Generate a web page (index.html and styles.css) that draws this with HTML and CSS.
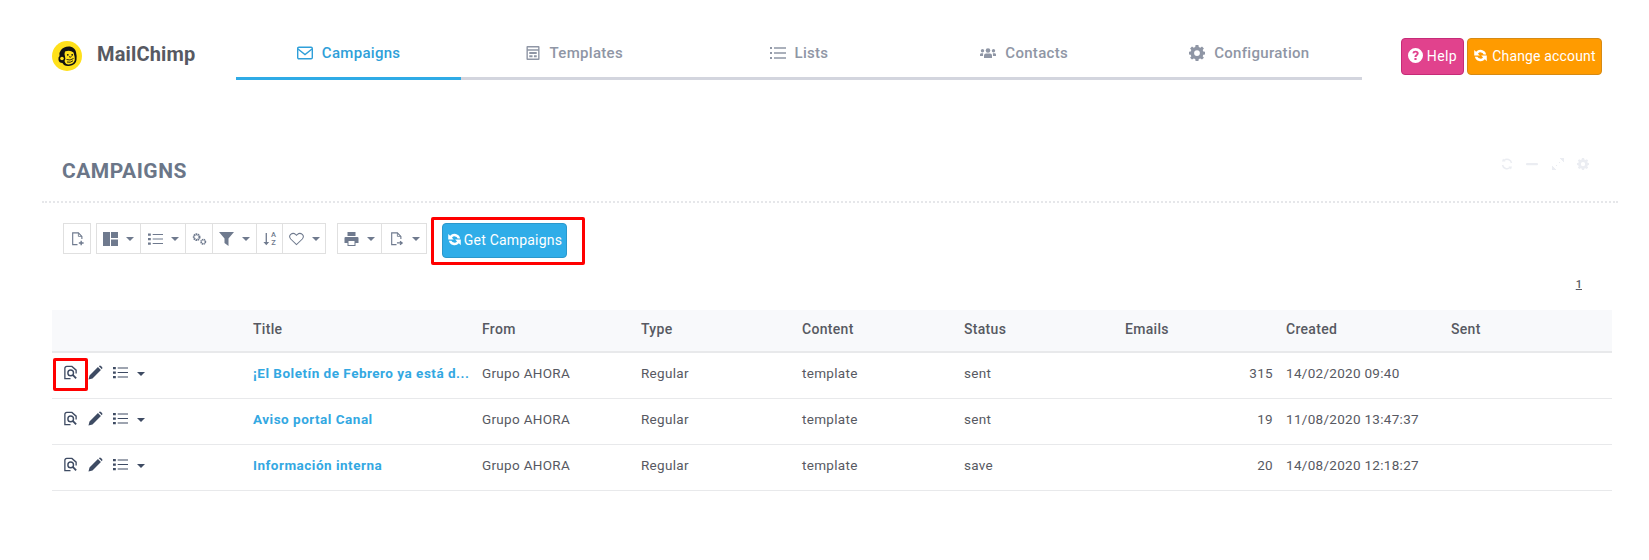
FILE: index.html
```html
<!DOCTYPE html>
<html lang="en">
<head>
<meta charset="utf-8">
<title>MailChimp Campaigns</title>
<link rel="stylesheet" href="styles.css">
</head>
<body>
<svg class="defs" aria-hidden="true">
  <defs>
    <symbol id="i-sync" viewBox="0 0 16 16"><path d="M14 6.800A6.200 6.200 0 0 0 3.300 3.900L1.300 2V8H7.300L5.300 6A3.500 3.500 0 0 1 11.300 6.800ZM2 9.200A6.200 6.200 0 0 0 12.700 12.100L14.700 14V8H8.700L10.700 10A3.500 3.500 0 0 1 4.700 9.200Z" fill="currentColor"/></symbol>
    <symbol id="i-caret" viewBox="0 0 8 4"><path d="M0 0H8L4 4Z" fill="currentColor"/></symbol>
    <symbol id="i-list" viewBox="0 0 16 14"><path d="M0 1H3V3.400H0ZM0 5.800H3V8.200H0ZM0 10.600H3V13H0ZM5 1.600H16V2.800H5ZM5 6.400H16V7.600H5ZM5 11.200H16V12.400H5Z" fill="currentColor"/></symbol>
    <symbol id="i-doc" viewBox="0 0 14 16"><path d="M7 14.500H1.500V1H8L12 5V8" fill="none" stroke="currentColor" stroke-width="1.300"/><path d="M8 1V5H12" fill="none" stroke="currentColor" stroke-width="1"/></symbol>
    <symbol id="i-pen" viewBox="0 0 16 16"><path d="M0.500 15.500L1.600 11.200L10.600 2.200L13.800 5.400L4.800 14.400ZM11.600 1.200Q12.700 0.100 13.800 1L15 2.200Q15.900 3.300 14.800 4.400Z" fill="currentColor"/></symbol>
    <symbol id="i-view" viewBox="0 0 16 16"><path d="M8 14.500H2V3.500A2 2 0 0 1 4 1.500H9.500L14 5.500V9" fill="none" stroke="currentColor" stroke-width="1.400"/><circle cx="8.200" cy="8.400" r="3" fill="none" stroke="currentColor" stroke-width="1.500"/><path d="M10.400 10.600L14 14.200" stroke="currentColor" stroke-width="2"/></symbol>
    <symbol id="i-cog" viewBox="0 0 16 16"><path d="M6.600 0H9.400L9.800 2.100L11.300 2.700L13 1.500L14.900 3.400L13.700 5.100L14.300 6.600L16 6.800V9.400L14.300 9.700L13.700 11.200L14.900 12.800L13 14.600L11.300 13.500L9.800 14.100L9.400 16H6.600L6.200 14.100L4.700 13.500L3 14.600L1.100 12.800L2.300 11.200L1.700 9.700L0 9.400V6.800L1.700 6.600L2.300 5.100L1.100 3.400L3 1.500L4.700 2.700L6.200 2.100ZM8 5.200A2.900 2.900 0 1 0 8 11A2.900 2.900 0 1 0 8 5.200Z" fill="currentColor" fill-rule="evenodd"/></symbol>
  </defs>
</svg>

<header class="topbar">
  <div class="brand">
    <svg class="brand-logo" viewBox="0 0 30 30" aria-hidden="true">
      <circle cx="15" cy="15" r="15" fill="#ffe01b"/>
      <path d="M9 9Q12 5 18 5.500Q23 6.500 24 11Q25 15 24.500 19Q24 24 17 25Q12 25.500 10.500 22Q7 22 6.500 19Q6 16 7.500 15Q6.500 12 9 9Z" fill="#111"/>
      <path d="M13 10.500Q18 8.500 21.500 11.500Q23 16 22.800 19Q22 23 16.500 23.500Q13.500 23.500 12.500 20Q14 18 13 15.500Q12 13 13 10.500Z" fill="#ffe01b"/>
      <circle cx="15.800" cy="13.800" r="0.900" fill="#111"/><circle cx="20.200" cy="13.800" r="0.900" fill="#111"/>
      <path d="M14.500 18.500Q18 20 21.500 17.500M15 21Q18.500 22 21 19.800M17 15.500Q18 17 19.500 15.500" fill="none" stroke="#111" stroke-width="0.900"/>
      <circle cx="10" cy="17.500" r="1.800" fill="#ffe01b"/>
    </svg>
    <span class="brand-name">MailChimp</span>
  </div>
  <nav class="tabs">
    <a class="tab tab-active">
      <svg class="tab-icon" viewBox="0 0 16 13"><rect x="0.700" y="0.700" width="14.600" height="11.600" rx="1.200" fill="none" stroke="currentColor" stroke-width="1.400"/><path d="M1 2.500L8 8L15 2.500" fill="none" stroke="currentColor" stroke-width="1.400"/></svg>
      Campaigns</a>
    <a class="tab">
      <svg class="tab-icon" viewBox="0 0 14 15"><path d="M1 0H13A1 1 0 0 1 14 1V14A1 1 0 0 1 13 15H1A1 1 0 0 1 0 14V1A1 1 0 0 1 1 0ZM1.500 1.500V3.500H12.500V1.500ZM1.500 5V13.500H12.500V5ZM3 6.500H11V8.500H3ZM3 10H6.500V12H3ZM8 10H11V12H8Z" fill="currentColor" fill-rule="evenodd"/></svg>
      Templates</a>
    <a class="tab">
      <svg class="tab-icon" viewBox="0 0 16 13"><path d="M0 0.500H2V2.500H0ZM0 5.500H2V7.500H0ZM0 10.500H2V12.500H0ZM4 0.800H16V2.200H4ZM4 5.800H16V7.200H4ZM4 10.800H16V12.200H4Z" fill="currentColor"/></svg>
      Lists</a>
    <a class="tab">
      <svg class="tab-icon" viewBox="0 0 16 10"><circle cx="8" cy="2.500" r="2.300" fill="currentColor"/><circle cx="2.500" cy="2.800" r="1.700" fill="currentColor"/><circle cx="13.500" cy="2.800" r="1.700" fill="currentColor"/><path d="M4 10V7.500Q4 5.500 6 5.500H10Q12 5.500 12 7.500V10ZM0 8V6.500Q0 5.200 1.500 5.200H3.200Q3 6 3 8ZM16 8V6.500Q16 5.200 14.500 5.200H12.800Q13 6 13 8Z" fill="currentColor"/></svg>
      Contacts</a>
    <a class="tab">
      <svg class="tab-icon tab-icon-cog"><use href="#i-cog"/></svg>
      Configuration</a>
  </nav>
  <div class="account-actions">
    <a class="btn btn-help">
      <svg class="btn-icon" viewBox="0 0 14 14"><path d="M7 0A7 7 0 1 1 7 14A7 7 0 1 1 7 0ZM7 2.500Q4.500 2.500 4 4.800L5.800 5.200Q6 4.200 7 4.200Q8.200 4.300 8.100 5.100Q8 5.700 7 6.300Q6 7 6 8.500H7.900Q7.900 7.800 8.700 7.200Q10 6.300 10 5Q9.800 2.600 7 2.500ZM6 9.300V11.200H8V9.300Z" fill="#fff" fill-rule="evenodd"/></svg>
      Help</a>
    <a class="btn btn-account"><svg class="btn-icon"><use href="#i-sync"/></svg> Change account</a>
  </div>
</header>

<main class="portlet">
  <div class="portlet-head">
    <h1 class="portlet-title">CAMPAIGNS</h1>
    <div class="portlet-tools">
      <svg class="tool" viewBox="0 0 12 12"><path d="M10.500 5A4.500 4.500 0 0 0 3 2.500M1.500 7A4.500 4.500 0 0 0 9 9.500" fill="none" stroke="currentColor" stroke-width="1.500"/><path d="M2 0.500L4.500 3.500H1ZM10 11.500L7.500 8.500H11Z" fill="currentColor"/></svg>
      <svg class="tool" viewBox="0 0 12 12"><rect y="5" width="12" height="2.200" rx="1" fill="currentColor"/></svg>
      <svg class="tool" viewBox="0 0 12 12"><path d="M8 0H12V4ZM0 8L4 12H0ZM7 4L8 5M4 7L5 8" fill="currentColor" stroke="currentColor"/></svg>
      <svg class="tool"><use href="#i-cog"/></svg>
    </div>
  </div>

  <div class="toolbar">
    <div class="tool-group">
      <button class="tbtn tbtn-new">
        <svg class="ticon" viewBox="0 0 14 16"><use href="#i-doc"/><path d="M8.500 12.500H14M11.200 10V15" stroke="currentColor" stroke-width="1.600"/></svg>
      </button>
    </div>
    <div class="tool-group">
      <button class="tbtn w43">
        <svg class="ticon" viewBox="0 0 15 14"><path d="M0 0H7V14H0ZM8 0H15V6H8ZM8 7.500H15V14H8Z" fill="currentColor"/></svg>
        <svg class="caret"><use href="#i-caret"/></svg>
      </button>
      <button class="tbtn w45">
        <svg class="ticon" viewBox="0 0 16 14"><use href="#i-list"/></svg>
        <svg class="caret"><use href="#i-caret"/></svg>
      </button>
      <button class="tbtn w27">
        <svg class="ticon" viewBox="0 0 16 14"><circle cx="5" cy="5" r="3" fill="none" stroke="currentColor" stroke-width="2.200" stroke-dasharray="1.600 .5"/><circle cx="12" cy="10" r="2.300" fill="none" stroke="currentColor" stroke-width="1.800" stroke-dasharray="1.200 .5"/></svg>
      </button>
      <button class="tbtn w44">
        <svg class="ticon" viewBox="0 0 15 14"><path d="M0 0H15L9.500 6.500V14L5.500 11V6.500Z" fill="currentColor"/></svg>
        <svg class="caret"><use href="#i-caret"/></svg>
      </button>
      <button class="tbtn w26 tbtn-sort">
        <svg class="ticon" viewBox="0 0 8 14"><path d="M3 0H4.500V10.500H7L3.800 14L0.500 10.500H3Z" fill="currentColor"/></svg><span class="az">A<br>Z</span>
      </button>
      <button class="tbtn w43">
        <svg class="ticon" viewBox="0 0 16 14"><path d="M8 13L1.800 7Q-0.500 4.300 1.800 2Q4.500 0 7 2L8 3L9 2Q11.500 0 14.200 2Q16.500 4.300 14.200 7Z" fill="none" stroke="currentColor" stroke-width="1.100"/></svg>
        <svg class="caret"><use href="#i-caret"/></svg>
      </button>
    </div>
    <div class="tool-group">
      <button class="tbtn w43">
        <svg class="ticon" viewBox="0 0 14 14"><path d="M3 0H11V4H3ZM1 5H13Q14 5 14 6V11H11V14H3V11H0V6Q0 5 1 5ZM4 9V13H10V9Z" fill="currentColor" fill-rule="evenodd"/></svg>
        <svg class="caret"><use href="#i-caret"/></svg>
      </button>
      <button class="tbtn w45">
        <svg class="ticon" viewBox="0 0 14 16"><use href="#i-doc"/><path d="M7.500 12.500H13M11 10.500L13.500 12.500L11 14.500" fill="none" stroke="currentColor" stroke-width="1.400"/></svg>
        <svg class="caret"><use href="#i-caret"/></svg>
      </button>
    </div>
    <a class="btn btn-get"><svg class="btn-icon"><use href="#i-sync"/></svg> Get Campaigns</a>
  </div>

  <div class="pager"><a class="pager-link">1</a></div>

  <table class="grid">
    <colgroup>
      <col class="c-act"><col class="c-title"><col class="c-from"><col class="c-type"><col class="c-content"><col class="c-status"><col class="c-emails"><col class="c-created"><col class="c-sent">
    </colgroup>
    <thead>
      <tr><th></th><th>Title</th><th>From</th><th>Type</th><th>Content</th><th>Status</th><th>Emails</th><th>Created</th><th>Sent</th></tr>
    </thead>
    <tbody>
      <tr>
        <td class="actions"><span class="action-set"><svg class="aicon"><use href="#i-view"/></svg><svg class="aicon"><use href="#i-pen"/></svg><svg class="aicon"><use href="#i-list"/></svg><svg class="acaret"><use href="#i-caret"/></svg></span></td>
        <td><a class="title-link">¡El Boletín de Febrero ya está d...</a></td><td>Grupo AHORA</td><td>Regular</td><td>template</td><td>sent</td><td class="num">315</td><td>14/02/2020 09:40</td><td></td>
      </tr>
      <tr>
        <td class="actions"><span class="action-set"><svg class="aicon"><use href="#i-view"/></svg><svg class="aicon"><use href="#i-pen"/></svg><svg class="aicon"><use href="#i-list"/></svg><svg class="acaret"><use href="#i-caret"/></svg></span></td>
        <td><a class="title-link">Aviso portal Canal</a></td><td>Grupo AHORA</td><td>Regular</td><td>template</td><td>sent</td><td class="num">19</td><td>11/08/2020 13:47:37</td><td></td>
      </tr>
      <tr>
        <td class="actions"><span class="action-set"><svg class="aicon"><use href="#i-view"/></svg><svg class="aicon"><use href="#i-pen"/></svg><svg class="aicon"><use href="#i-list"/></svg><svg class="acaret"><use href="#i-caret"/></svg></span></td>
        <td><a class="title-link">Información interna</a></td><td>Grupo AHORA</td><td>Regular</td><td>template</td><td>save</td><td class="num">20</td><td>14/08/2020 12:18:27</td><td></td>
      </tr>
    </tbody>
  </table>
</main>

<div class="mark mark-get"></div>
<div class="mark mark-view"></div>
</body>
</html>
```
FILE: styles.css
```css
* { box-sizing: border-box; }
html, body { margin: 0; height: 100%; background: #fff; }
body {
  position: relative;
  font-family: Roboto, "Liberation Sans", sans-serif;
  font-size: 13.5px;
  color: #575962;
  overflow: hidden;
}
.defs { position: absolute; width: 0; height: 0; }

.topbar { display: flex; padding: 38px 0 0 52px; height: 80px; }
.brand { display: flex; align-items: flex-start; width: 184px; padding-top: 3px; gap: 15px; }
.brand-logo { width: 30px; height: 30px; flex: none; }
.brand-name { font-size: 20px; font-weight: 700; color: #575962; line-height: 26px; letter-spacing: 0.15px; }

.tabs { display: flex; width: 1126px; height: 42px; border-bottom: 3px solid #d3d5de; }
.tab {
  display: flex; align-items: center; justify-content: center; gap: 9px;
  flex: 0 0 225.2px; height: 42px; padding-bottom: 10px;
  font-size: 15px; font-weight: 500; color: #8f96a5; letter-spacing: 0.3px;
  border-bottom: 3px solid transparent;
}
.tab-active { color: #2f9fd9; border-bottom-color: #2fabe6; }
.tab-icon { width: 16px; height: 14px; flex: none; }
.tab-icon-cog { width: 16px; height: 16px; }

.account-actions { display: flex; gap: 3px; margin-left: 39px; }
.btn {
  display: inline-flex; align-items: center; justify-content: center; gap: 4px;
  height: 37px; padding-bottom: 2px; border: 1px solid; border-radius: 4px;
  color: #fff; font-size: 14px; font-weight: 400; letter-spacing: 0.15px;
}
.btn-help { width: 63px; background: #e1428d; border-color: #c62b78; letter-spacing: 0.4px; }
.btn-account { width: 135px; background: #ff9b00; border-color: #d68a14; }
.btn-icon { width: 15px; height: 15px; flex: none; color: #fff; }

.portlet { margin: 0 31px 0 42px; }
.portlet-head {
  display: flex; align-items: center; justify-content: space-between;
  height: 84px; margin-top: 39px; padding: 0 29px 0 20px;
  border-bottom: 2px dotted #e6e7ea;
}
.portlet-title { margin: 0; padding-top: 21px; font-size: 21px; font-weight: 700; color: #6b7688; letter-spacing: 0.5px; }
.portlet-tools { display: flex; gap: 13.5px; align-items: center; color: #ebedf2; margin-top: 8px; }
.tool { width: 12px; height: 12px; }

.toolbar { display: flex; align-items: flex-start; gap: 5px; padding: 20px 0 0 21px; height: 72px; }
.tool-group { display: flex; height: 31px; border: 1px solid #e0e0e0; }
.tool-group:nth-child(3) { margin-left: 6px; }
.tbtn {
  display: flex; align-items: center; justify-content: center; gap: 8px;
  height: 29px; padding: 0; background: #fff; border: 0; border-left: 1px solid #e0e0e0;
  color: #6f7a8e; font: inherit;
}
.tbtn:first-child { border-left: 0; }
.tbtn-new { width: 26px; }
.w43 { width: 43px; }
.w44 { width: 44px; }
.w45 { width: 45px; }
.w27 { width: 27px; }
.w26 { width: 26px; }
.ticon { width: 15px; height: 14px; flex: none; }
.caret { width: 8px; height: 4px; flex: none; color: #6f7a8e; }
.tbtn-sort { gap: 1px; }
.tbtn-sort .ticon { width: 7px; }
.az { font-size: 7.500px; line-height: 7.500px; font-weight: 500; color: #6f7a8e; }
.btn-get { width: 125px; height: 35px; margin-left: 10px; background: #2fade8; border-color: #2a98cc; gap: 2px; letter-spacing: 0.2px; }

.pager { height: 35px; padding: 1px 36px 0 0; text-align: right; font-size: 11px; font-weight: 500; line-height: 17px; }
.pager-link { text-decoration: underline; color: #575962; }

.grid { width: 1560px; margin-left: 10px; border-collapse: collapse; table-layout: fixed; }
.c-act { width: 191px; }
.c-title { width: 229px; }
.c-from { width: 159px; }
.c-type { width: 161px; }
.c-content { width: 162px; }
.c-status { width: 161px; }
.c-emails { width: 161px; }
.c-created { width: 165px; }
.c-sent { width: 171px; }
th {
  height: 42px; padding: 0 10px 4px; text-align: left; background: #f8f9fb;
  border-bottom: 2px solid #e8e9eb; font-size: 14px; font-weight: 500; color: #575962; letter-spacing: 0.3px;
}
td { height: 46px; padding: 0 10px 5px; border-bottom: 1px solid #e8e9eb; white-space: nowrap; letter-spacing: 0.3px; }
.title-link { color: #33a8e2; font-weight: 700; letter-spacing: 0.5px; }
.num { text-align: right; padding-right: 3px; }
.actions { padding-left: 11px; }
.action-set { display: flex; align-items: center; gap: 10px; color: #3e4b63; }
.aicon { width: 15px; height: 15px; flex: none; }
.acaret { width: 8px; height: 4px; flex: none; margin: 2px 0 0 -1px; }

.mark { position: absolute; border: 3px solid #f00; border-radius: 2px; pointer-events: none; }
.mark-get { left: 431px; top: 217px; width: 154px; height: 48px; }
.mark-view { left: 53px; top: 358px; width: 35px; height: 33px; }
```
